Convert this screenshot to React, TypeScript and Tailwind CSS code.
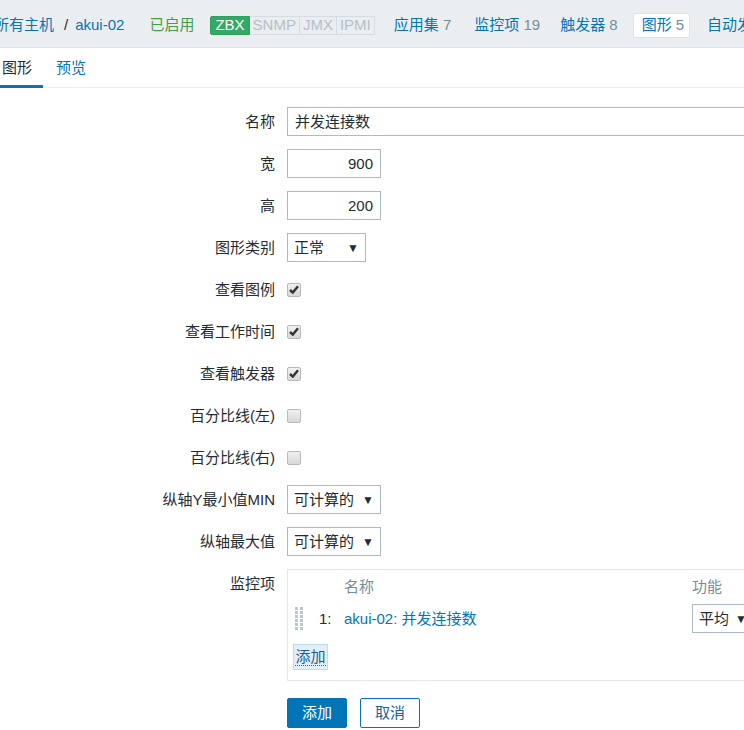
import React from 'react';

const FONT = "font-['Liberation_Sans','Noto_Sans_CJK_SC',sans-serif]";

function Row({ label, children }: { label: string; children: React.ReactNode }) {
  return (
    <div className="flex h-[29px] items-center">
      <div className="w-[275px] shrink-0 text-right text-[#1f2c33]">{label}</div>
      <div className="ml-[12px] flex items-center">{children}</div>
    </div>
  );
}

function Select({ value, width }: { value: string; width: string }) {
  return (
    <div
      className={`flex h-[29px] items-center justify-between border border-[#acbbc2] bg-white pl-[6px] pr-[6px] text-[#1f2c33] ${width}`}
    >
      <span>{value}</span>
      <span className="text-[12px] leading-[12px] text-[#1f2c33]">▼</span>
    </div>
  );
}

function Check({ checked }: { checked: boolean }) {
  return (
    <div className="flex h-[14px] w-[14px] items-center justify-center rounded-[2px] border border-[#b9b9b9] bg-gradient-to-b from-[#f0f0f0] to-[#d8d8d8]">
      {checked && (
        <svg width="10" height="9" viewBox="0 0 10 9">
          <path d="M1 5 L3.8 7.6 L9 1.2" fill="none" stroke="#333" strokeWidth="2.4" />
        </svg>
      )}
    </div>
  );
}

function DragHandle() {
  const dots = [];
  for (let r = 0; r < 6; r++) {
    for (let c = 0; c < 2; c++) {
      dots.push(<rect key={`${r}-${c}`} x={c * 5} y={r * 4 + 1} width="3" height="3" fill="#bcc6cc" />);
    }
  }
  return (
    <svg width="8" height="25" viewBox="0 0 8 25">
      {dots}
    </svg>
  );
}

function Badge({ label, on }: { label: string; on?: boolean }) {
  return (
    <span
      className={
        on
          ? 'flex h-[19px] items-center rounded-l-[2px] border border-[#2f9f5e] bg-[#34a865] px-[4px] text-white'
          : 'flex h-[19px] items-center border border-l-0 border-[#d6dde0] bg-[#ebeef0] px-[3px] text-[#b4c0c6]'
      }
    >
      {label}
    </span>
  );
}

export default function App() {
  return (
    <div className={`${FONT} relative h-[730px] w-[744px] overflow-hidden bg-white text-[15px] leading-[18px]`}>
      {/* header */}
      <div className="flex h-[48px] items-center whitespace-nowrap border-b border-[#dfe4e7] bg-[#ebeef0] pt-[3px]">
        <span className="-ml-[6px] text-[#0275b8]">所有主机</span>
        <span className="ml-[10px] text-[#1f2c33]">/</span>
        <span className="ml-[7px] text-[#0275b8]">akui-02</span>
        <span className="ml-[25px] text-[#429e47]">已启用</span>
        <div className="ml-[16px] flex">
          <Badge label="ZBX" on />
          <Badge label="SNMP" />
          <Badge label="JMX" />
          <Badge label="IPMI" />
        </div>
        <span className="ml-[19px] text-[#0275b8]">
          应用集 <span className="text-[#768d99]">7</span>
        </span>
        <span className="ml-[23px] text-[#0275b8]">
          监控项 <span className="text-[#768d99]">19</span>
        </span>
        <span className="ml-[20px] text-[#0275b8]">
          触发器 <span className="text-[#768d99]">8</span>
        </span>
        <span className="ml-[15px] flex h-[25px] items-center rounded-[2px] border border-[#dfe4e7] bg-white pl-[8px] pr-[5px] text-[#0275b8]">
          图形 <span className="ml-[4px] text-[#768d99]">5</span>
        </span>
        <span className="ml-[17px] text-[#0275b8]">自动发现规则</span>
      </div>

      {/* tabs */}
      <div className="flex h-[40px] items-stretch border-b border-[#ebeef0]">
        <div className="relative flex w-[43px] items-center pl-[2px] text-[#1f2c33]">
          图形
          <div className="absolute bottom-[-1px] left-0 h-[3px] w-[43px] bg-[#0275b8]" />
        </div>
        <div className="ml-[13px] flex items-center text-[#0275b8]">预览</div>
      </div>

      {/* form */}
      <div className="flex flex-col gap-[13px] pt-[19px]">
        <Row label="名称">
          <div className="flex h-[29px] w-[600px] items-center border border-[#acbbc2] px-[7px] text-[#1f2c33]">
            并发连接数
          </div>
        </Row>
        <Row label="宽">
          <div className="flex h-[29px] w-[94px] items-center justify-end border border-[#acbbc2] px-[7px] text-[#1f2c33]">
            900
          </div>
        </Row>
        <Row label="高">
          <div className="flex h-[29px] w-[94px] items-center justify-end border border-[#acbbc2] px-[7px] text-[#1f2c33]">
            200
          </div>
        </Row>
        <Row label="图形类别">
          <Select value="正常" width="w-[79px]" />
        </Row>
        <Row label="查看图例">
          <Check checked />
        </Row>
        <Row label="查看工作时间">
          <Check checked />
        </Row>
        <Row label="查看触发器">
          <Check checked />
        </Row>
        <Row label="百分比线(左)">
          <Check checked={false} />
        </Row>
        <Row label="百分比线(右)">
          <Check checked={false} />
        </Row>
        <Row label="纵轴Y最小值MIN">
          <Select value="可计算的" width="w-[94px]" />
        </Row>
        <Row label="纵轴最大值">
          <Select value="可计算的" width="w-[94px]" />
        </Row>

        <div className="flex items-start">
          <div className="flex h-[29px] w-[275px] shrink-0 items-center justify-end text-[#1f2c33]">监控项</div>
          <div className="ml-[12px] w-[540px] border border-[#e4e8ea] pb-[10px]">
            <div className="flex h-[34px] items-center text-[#768d99]">
              <span className="ml-[56px] w-[348px]">名称</span>
              <span>功能</span>
            </div>
            <div className="flex h-[29px] items-center">
              <div className="ml-[7px] flex w-[24px] items-center">
                <DragHandle />
              </div>
              <span className="w-[25px] text-[#1f2c33]">1:</span>
              <span className="w-[348px] text-[#0275b8]">akui-02: 并发连接数</span>
              <Select value="平均" width="w-[62px]" />
            </div>
            <div className="ml-[5px] mt-[11px] flex h-[26px] w-[35px] items-center justify-center border border-[#bcdaf0] bg-[#e3eff8]">
              <span className="border-b border-dotted border-[#0275b8] leading-[17px] text-[#1a5e98]">添加</span>
            </div>
          </div>
        </div>
      </div>

      {/* buttons */}
      <div className="ml-[287px] mt-[17px] flex gap-[13px]">
        <button className="h-[30px] w-[60px] rounded-[2px] border border-[#0275b8] bg-[#0275b8] text-white">
          添加
        </button>
        <button className="h-[30px] w-[60px] rounded-[2px] border border-[#0275b8] bg-white text-[#1a5e98]">
          取消
        </button>
      </div>
    </div>
  );
}
